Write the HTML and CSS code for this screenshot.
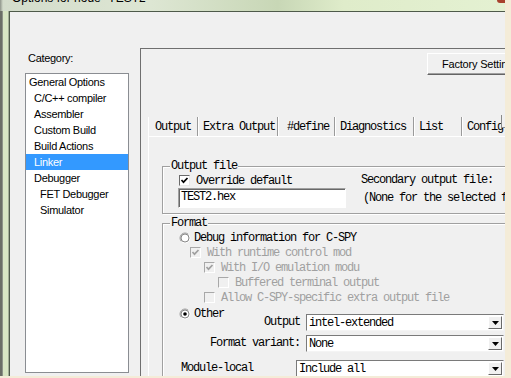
FILE: index.html
```html
<!DOCTYPE html>
<html lang="en">
<head>
  <meta charset="UTF-8">
  <title>Options for node "TEST2"</title>
  <link rel="stylesheet" href="styles.css">
</head>
<body>
  <div class="screen">
    <!-- Title bar (mostly off screen) -->
    <div class="titlebar">
      <span class="title-text">Options for node "TEST2"</span>
      <span class="title-close"></span>
    </div>

    <div class="window-row">
      <div class="frame-edge"></div>

      <div class="dialog">
        <!-- Category list -->
        <div class="sidebar">
          <div class="category-label">Category:</div>
          <ul class="category-list">
            <li>General Options</li>
            <li class="indent-1">C/C++ compiler</li>
            <li class="indent-1">Assembler</li>
            <li class="indent-1">Custom Build</li>
            <li class="indent-1">Build Actions</li>
            <li class="indent-1 selected">Linker</li>
            <li class="indent-1">Debugger</li>
            <li class="indent-2">FET Debugger</li>
            <li class="indent-2">Simulator</li>
          </ul>
        </div>

        <!-- Settings panel -->
        <div class="settings">
          <div class="settings-top">
            <button class="btn">Factory Settings</button>
          </div>

          <div class="tabs">
            <div class="tab tab-output active">Output</div>
            <div class="tab tab-extra">Extra Output</div>
            <div class="tab tab-define">#define</div>
            <div class="tab tab-diag">Diagnostics</div>
            <div class="tab tab-list">List</div>
            <div class="tab tab-config">Config</div>
            <span class="tab-scroll"></span>
          </div>

          <div class="tab-page">
            <fieldset class="group">
              <legend>Output file</legend>
              <div class="file-grid">
                <div class="opt">
                  <span class="check checked"><svg viewBox="0 0 9 9" width="9" height="9"><polyline points="1.5,4 3.5,6.2 7.5,2" fill="none" stroke="#000" stroke-width="1.7"/></svg></span>
                  <span>Override default</span>
                </div>
                <div class="plain">Secondary output file:</div>
                <div class="textbox">TEST2.hex</div>
                <div class="plain note">(None for the selected format)</div>
              </div>
            </fieldset>

            <fieldset class="group format">
              <legend>Format</legend>
              <div class="opt">
                <span class="radio"><svg viewBox="0 0 12 12" width="12" height="12"><path d="M2.46 9.54A5 5 0 0 1 9.54 2.46" fill="none" stroke="#a0a0a0"/><path d="M9.54 2.46A5 5 0 0 1 2.46 9.54" fill="none" stroke="#fff"/><circle cx="6" cy="6" r="4" fill="#fff" stroke="#696969" stroke-width="0.8"/></svg></span>
                <span>Debug information for C-SPY</span>
              </div>
              <div class="opt lvl-1 disabled">
                <span class="check checked"><svg viewBox="0 0 9 9" width="9" height="9"><polyline points="1.5,4 3.5,6.2 7.5,2" fill="none" stroke="#a0a0a0" stroke-width="1.7"/></svg></span>
                <span>With runtime control mod</span>
              </div>
              <div class="opt lvl-2 disabled">
                <span class="check checked"><svg viewBox="0 0 9 9" width="9" height="9"><polyline points="1.5,4 3.5,6.2 7.5,2" fill="none" stroke="#a0a0a0" stroke-width="1.7"/></svg></span>
                <span>With I/O emulation modu</span>
              </div>
              <div class="opt lvl-3 disabled">
                <span class="check"></span>
                <span>Buffered terminal output</span>
              </div>
              <div class="opt lvl-2 disabled">
                <span class="check"></span>
                <span>Allow C-SPY-specific extra output file</span>
              </div>
              <div class="opt opt-other">
                <span class="radio"><svg viewBox="0 0 12 12" width="12" height="12"><path d="M2.46 9.54A5 5 0 0 1 9.54 2.46" fill="none" stroke="#a0a0a0"/><path d="M9.54 2.46A5 5 0 0 1 2.46 9.54" fill="none" stroke="#fff"/><circle cx="6" cy="6" r="4" fill="#fff" stroke="#696969" stroke-width="0.8"/><circle cx="6" cy="6" r="1.8" fill="#000"/></svg></span>
                <span>Other</span>
              </div>

              <div class="combo-grid">
                <div class="combo-label">Output</div>
                <div class="combo">
                  <span>intel-extended</span>
                  <span class="combo-btn"><svg viewBox="0 0 7 4" width="7" height="4"><path d="M0 0H7L3.5 4Z" fill="#000"/></svg></span>
                </div>
                <div class="combo-label">Format variant:</div>
                <div class="combo">
                  <span>None</span>
                  <span class="combo-btn"><svg viewBox="0 0 7 4" width="7" height="4"><path d="M0 0H7L3.5 4Z" fill="#000"/></svg></span>
                </div>
              </div>

              <div class="module-row">
                <div class="module-label">Module-local</div>
                <div class="combo combo-wide">
                  <span>Include all</span>
                  <span class="combo-btn"><svg viewBox="0 0 7 4" width="7" height="4"><path d="M0 0H7L3.5 4Z" fill="#000"/></svg></span>
                </div>
              </div>
            </fieldset>
          </div>
        </div>
      </div>
    </div>
  </div>
</body>
</html>
```

FILE: styles.css
```css
/* Global */
body {
  margin: 0;
  width: 511px;
  height: 378px;
  overflow: hidden;
  background-color: #f4ecd8;
  font-family: 'Liberation Sans', Arial, sans-serif;
  font-size: 11px;
  color: #000;
}
.screen {
  width: 505px;
  height: 376px;
  overflow: hidden;
  display: flex;
  flex-direction: column;
}

/* Title bar */
.titlebar {
  flex: none;
  height: 11px;
  display: flex;
  overflow: hidden;
  background: linear-gradient(90deg, #8e948a 0, #d3dccb 3px, #dde6d3 30%, #c8d7b6 55%, #dfecca 68%, #e4f1d2 100%);
}
.title-text {
  margin-top: -9px;
  padding-left: 12px;
  font-size: 12px;
  line-height: 14px;
  white-space: nowrap;
}
.title-close {
  margin-left: auto;
  width: 8px;
  height: 3px;
  background-color: #a8412e;
  border-radius: 0 0 0 3px;
}

.window-row {
  flex: 1;
  display: flex;
  min-height: 0;
}
.frame-edge {
  flex: none;
  width: 9px;
  background: linear-gradient(90deg, #6b6e67 0 2px, #8d9388 2px 3px, #d8e6c4 3px 8px, #a3ae98 8px 9px);
}

/* Dialog */
.dialog {
  flex: 1;
  display: flex;
  align-items: flex-start;
  padding-left: 15px;
  background-color: #f0f0f0;
  border-left: 1px solid #4e5a4a;
  border-top: 1px solid #4e5a4a;
  overflow: hidden;
}

/* Category list */
.sidebar {
  flex: none;
  width: 104px;
  padding-top: 40px;
}
.category-label {
  padding-left: 3px;
  line-height: 13px;
  letter-spacing: -0.3px;
}
.category-list {
  list-style: none;
  margin: 8px 0 0;
  padding: 0;
  height: 298px;
  background-color: #fff;
  border: 1px solid #8a8d92;
}
.category-list li {
  padding-left: 3px;
  line-height: 16px;
  white-space: nowrap;
  letter-spacing: -0.3px;
}
.category-list .indent-1 {
  padding-left: 8px;
}
.category-list .indent-2 {
  padding-left: 14px;
}
.category-list .selected {
  background-color: #3399ff;
  color: #fff;
}

/* Settings panel */
.settings {
  flex: none;
  width: 400px;
  height: 400px;
  margin: 36px 0 0 11px;
  padding: 4px 0 0 7px;
  border-left: 1px solid #6f6f6f;
  border-top: 1px solid #6f6f6f;
  font-family: 'Liberation Mono', monospace;
  font-size: 12px;
  letter-spacing: -1.2px;
}
.settings-top {
  padding-left: 279px;
}
.btn {
  display: block;
  width: 100px;
  height: 22px;
  padding: 0 0 0 14px;
  margin: 0;
  text-align: left;
  font-family: 'Liberation Sans', Arial, sans-serif;
  font-size: 11px;
  letter-spacing: -0.2px;
  color: #000;
  background-color: #f0f0f0;
  border: 1px solid;
  border-color: #fff #646464 #646464 #fff;
  box-shadow: inset -1px -1px 0 #a0a0a0;
}

/* Tabs */
.tabs {
  position: relative;
  display: flex;
  height: 19px;
  margin-top: 42px;
}
.tab {
  flex: none;
  box-sizing: border-box;
  height: 19px;
  line-height: 20px;
  padding-left: 5px;
  border-right: 1px solid #9a9a9a;
  box-shadow: 1px 0 0 #fff;
  white-space: nowrap;
}
.tab-output {
  width: 50px;
  padding-left: 6px;
  border-left: 1px solid #fff;
}
.tab-extra { width: 80px; }
.tab-define { width: 57px; padding-left: 9px; }
.tab-diag { width: 79px; }
.tab-list { width: 48px; }
.tab-config { width: 60px; border-right: none; }
.tab-scroll {
  position: absolute;
  left: 353px;
  top: -2px;
  width: 20px;
  height: 12px;
  background-color: #f0f0f0;
  border-left: 1px solid #8a8a8a;
  border-bottom: 1px solid #8a8a8a;
}
.tab-page {
  height: 300px;
  padding-left: 13px;
  border-left: 1px solid #fff;
  border-top: 1px solid #fff;
}

/* Group boxes */
.group {
  width: 360px;
  margin: 23px 0 0;
  padding: 0 0 5px 15px;
  border: 1px solid #a0a0a0;
  box-shadow: inset 1px 1px 0 #fff, 1px 1px 0 #fff;
}
.group legend {
  margin-left: -8px;
  padding: 0 1px;
  line-height: 13px;
  background-color: #f0f0f0;
}
.group.format {
  margin-top: 3px;
  padding-top: 0;
}
.file-grid {
  display: grid;
  grid-template-columns: 168px auto;
  grid-template-rows: 15px 20px;
  column-gap: 15px;
}
.plain {
  line-height: 15px;
  white-space: nowrap;
}
.note {
  line-height: 20px;
  padding-left: 2px;
}
.textbox {
  box-sizing: border-box;
  height: 20px;
  line-height: 17px;
  padding-left: 2px;
  background-color: #fff;
  border: 1px solid;
  border-color: #a0a0a0 #fff #fff #a0a0a0;
  box-shadow: inset 1px 1px 0 #696969;
}

/* Check boxes and radios */
.opt {
  display: flex;
  align-items: center;
  gap: 6px;
  height: 15px;
  padding-left: 1px;
  white-space: nowrap;
}
.opt.lvl-1 { padding-left: 12px; }
.opt.lvl-2 { padding-left: 26px; }
.opt.lvl-3 { padding-left: 40px; }
.opt.disabled {
  color: #a0a0a0;
}
.opt-other {
  margin-top: 1px;
}
.check {
  flex: none;
  box-sizing: border-box;
  display: flex;
  align-items: center;
  justify-content: center;
  width: 11px;
  height: 11px;
  background-color: #fff;
  border: 1px solid;
  border-color: #6a6a6a #e8e8e8 #e8e8e8 #6a6a6a;
}
.disabled .check {
  background-color: #f0f0f0;
  border-color: #a8a8a8 #fff #fff #a8a8a8;
}
.radio {
  flex: none;
  display: flex;
  width: 12px;
  height: 12px;
  margin-right: -3px;
}

/* Combo boxes */
.combo-grid {
  display: grid;
  grid-template-columns: 122px 198px;
  grid-auto-rows: 17px;
  column-gap: 6px;
  row-gap: 4px;
  margin-top: -7px;
}
.combo-label {
  line-height: 17px;
  text-align: right;
  white-space: nowrap;
}
.combo {
  box-sizing: border-box;
  display: flex;
  align-items: center;
  justify-content: space-between;
  height: 17px;
  padding-left: 2px;
  background-color: #fff;
  border: 1px solid;
  border-color: #7a7a7a #f4f4f4 #f4f4f4 #7a7a7a;
  white-space: nowrap;
}
.combo-btn {
  box-sizing: border-box;
  display: flex;
  align-items: center;
  justify-content: center;
  width: 14px;
  height: 13px;
  margin-right: 1px;
  background-color: #f0f0f0;
  border: 1px solid;
  border-color: #fff #6a6a6a #6a6a6a #fff;
}
.module-row {
  display: flex;
  margin-top: 8px;
}
.module-label {
  box-sizing: border-box;
  width: 118px;
  padding-left: 3px;
  line-height: 17px;
}
.combo-wide {
  width: 208px;
}
```
